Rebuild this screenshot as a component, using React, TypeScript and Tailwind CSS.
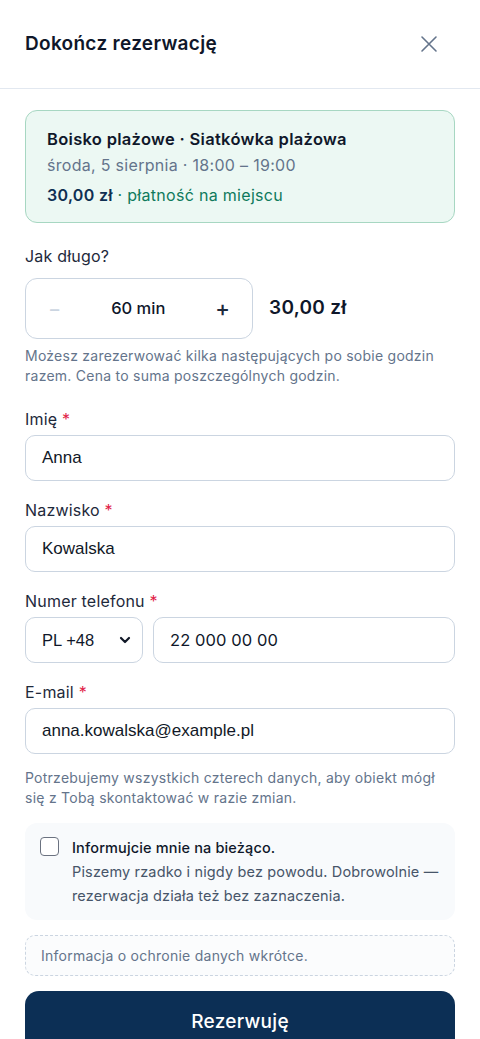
import React from "react";

export default function App() {
  const font = { fontFamily: "Inter, 'Noto Sans', sans-serif" };
  return (
    <div className="w-[480px] min-h-[1039px] bg-white text-[#0f172a]" style={font}>
      <div className="flex h-[89px] items-center justify-between border-b border-[#e2e8f0] pl-[25px] pr-[42px]">
        <h1 className="text-[19px] font-semibold tracking-[0.3px] text-[#0f172a]">Dokończ rezerwację</h1>
        <svg width="18" height="18" viewBox="0 0 18 18" fill="none" stroke="#64748b" strokeWidth="1.6" strokeLinecap="round">
          <path d="M2 2L16 16M16 2L2 16" />
        </svg>
      </div>
      <div className="px-[25px] pt-[21px]">
        <div className="rounded-[12px] border border-[#a7d7c2] bg-[#ecf8f3] px-[21px] pt-[15px] pb-[14px]">
          <div className="text-[16.5px] font-semibold leading-[26px] tracking-[0.3px]">Boisko plażowe · Siatkówka plażowa</div>
          <div className="text-[16px] leading-[26px] text-[#64748b] tracking-[0.3px]">środa, 5 sierpnia · 18:00 – 19:00</div>
          <div className="mt-[4px] text-[16px] leading-[26px] tracking-[0.3px]">
            <span className="font-semibold text-[#0f2f52]">30,00 zł</span>
            <span className="text-[#0f7a5c]"> · płatność na miejscu</span>
          </div>
        </div>

        <div className="mt-[21px] text-[16px] leading-[24px] tracking-[0.2px] text-[#1e293b]">Jak długo?</div>
        <div className="mt-[10px] flex items-center gap-[16px]">
          <div className="flex h-[61px] w-[228px] items-center justify-between rounded-[12px] border border-[#cbd5e1] px-[22px]">
            <span className="text-[20px] text-[#cbd5e1]">−</span>
            <span className="text-[16.5px] font-medium">60 min</span>
            <span className="text-[22px] font-medium text-[#1e293b]">+</span>
          </div>
          <span className="text-[19px] font-semibold tracking-[0.3px]">30,00 zł</span>
        </div>
        <p className="mt-[7px] text-[14px] leading-[20px] text-[#64748b] tracking-[0.25px]">
          Możesz zarezerwować kilka następujących po sobie godzin razem. Cena to suma poszczególnych godzin.
        </p>

        <Field label="Imię" value="Anna" className="mt-[22px]" />
        <Field label="Nazwisko" value="Kowalska" className="mt-[18px]" />

        <div className="mt-[18px]">
          <Label text="Numer telefonu" />
          <div className="mt-[5px] flex gap-[10px]">
            <div className="flex h-[46px] w-[118px] items-center justify-between rounded-[10px] border border-[#cbd5e1] pl-[16px] pr-[11px]">
              <span className="text-[16.5px]" style={{ fontFamily: "'Liberation Sans', Arial, sans-serif" }}>PL +48</span>
              <svg width="12" height="8" viewBox="0 0 12 8" fill="none" stroke="#111827" strokeWidth="2.2" strokeLinecap="round" strokeLinejoin="round">
                <path d="M2 2L6 6L10 2" />
              </svg>
            </div>
            <div className="flex h-[46px] flex-1 items-center rounded-[10px] border border-[#cbd5e1] px-[16px] text-[16.5px] tracking-[0.1px]">22 000 00 00</div>
          </div>
        </div>

        <Field label="E-mail" value="anna.kowalska@example.pl" className="mt-[18px]" />

        <p className="mt-[14px] text-[14px] leading-[20px] text-[#64748b] tracking-[0.25px]">
          Potrzebujemy wszystkich czterech danych, aby obiekt mógł się z Tobą skontaktować w razie zmian.
        </p>

        <div className="mt-[15px] flex gap-[13px] rounded-[12px] bg-[#f8fafc] pl-[15px] pr-[10px] pt-[13px] pb-[12px]">
          <div className="mt-[1px] h-[19px] w-[19px] shrink-0 rounded-[4px] border-[1.5px] border-[#6b7280] bg-white" />
          <div className="text-[14.5px] leading-[24px] tracking-[0.15px]">
            <div className="font-medium text-[#0f172a]">Informujcie mnie na bieżąco.</div>
            <div className="text-[#475569]">Piszemy rzadko i nigdy bez powodu. Dobrowolnie{"\u00a0"}— rezerwacja działa też bez zaznaczenia.</div>
          </div>
        </div>

        <div className="mt-[15px] flex h-[41px] items-center rounded-[10px] border border-dashed border-[#cbd5e1] bg-[#fbfcfd] px-[15px] text-[14px] text-[#64748b] tracking-[0.25px]">
          Informacja o ochronie danych wkrótce.
        </div>

        <div className="mt-[15px] flex h-[62px] items-center justify-center rounded-[14px] bg-[#0c2f55] text-[19px] font-medium tracking-[0.3px] text-white">
          Rezerwuję
        </div>
      </div>
    </div>
  );
}

function Label({ text }: { text: string }) {
  return (
    <div className="text-[16px] leading-[22px] tracking-[0.2px] text-[#1e293b]">
      {text} <span className="text-[#e11d48]">*</span>
    </div>
  );
}

function Field({ label, value, className }: { label: string; value: string; className?: string }) {
  return (
    <div className={className}>
      <Label text={label} />
      <div
        className="mt-[5px] flex h-[46px] items-center rounded-[10px] border border-[#cbd5e1] px-[16px] text-[17px] text-[#111827]"
        style={{ fontFamily: "'Liberation Sans', Arial, sans-serif" }}
      >
        {value}
      </div>
    </div>
  );
}
